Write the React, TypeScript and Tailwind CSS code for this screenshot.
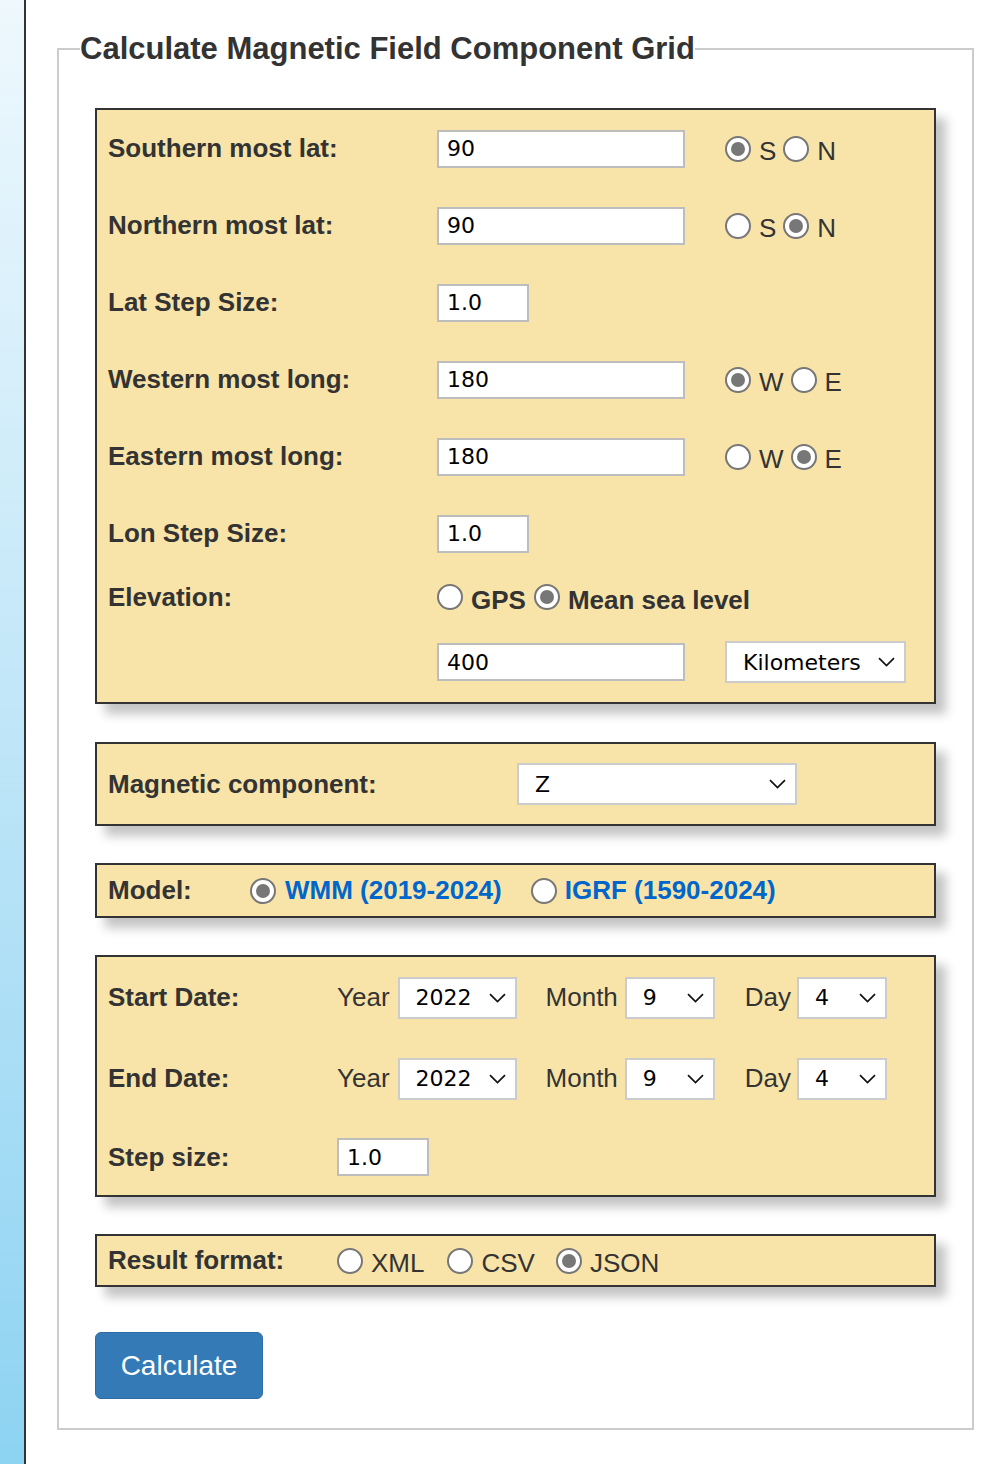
const inputFont = "font-['DejaVu_Sans',Verdana,sans-serif]";

function Radio({ checked }: { checked?: boolean }) {
  return (
    <span className="inline-flex h-[26px] w-[26px] shrink-0 items-center justify-center rounded-full border-2 border-[#777] bg-white">
      {checked && <span className="h-[14px] w-[14px] rounded-full bg-[#777]" />}
    </span>
  );
}

function Chevron() {
  return (
    <svg width="17" height="10" viewBox="0 0 17 10" fill="none" stroke="#111" strokeWidth="1.7">
      <path d="M1 1.2l7.5 7.3L16 1.2" />
    </svg>
  );
}

function Select({ value, className }: { value: string; className: string }) {
  return (
    <div
      className={`flex h-[42px] shrink-0 items-center justify-between border-2 border-[#ccc] bg-white pl-[16px] pr-[9px] text-[22px] text-black ${inputFont} ${className}`}
    >
      <span>{value}</span>
      <Chevron />
    </div>
  );
}

function TextBox({ value, className }: { value: string; className: string }) {
  return (
    <input
      readOnly
      value={value}
      className={`h-[38px] shrink-0 border-2 border-[#bdbdbd] bg-white px-[8px] text-[22px] text-black outline-none ${inputFont} ${className}`}
    />
  );
}

function Choice({
  checked,
  label,
  bold,
  className = "",
}: {
  checked?: boolean;
  label: string;
  bold?: boolean;
  className?: string;
}) {
  return (
    <span className={`flex shrink-0 items-center ${className}`}>
      <Radio checked={checked} />
      <span className={`ml-[8px] mt-[6px] text-[26px] ${bold ? "font-bold" : ""}`}>{label}</span>
    </span>
  );
}

const Panel = ({ children, className = "" }: { children: React.ReactNode; className?: string }) => (
  <div className={`border-2 border-[#333] bg-[#f8e4a8] pl-[11px] shadow-[10px_10px_10px_#c4c4c4] ${className}`}>{children}</div>
);

const Label = ({ children, className }: { children: React.ReactNode; className: string }) => (
  <span className={`shrink-0 text-[26px] font-bold ${className}`}>{children}</span>
);

export default function App() {
  const coordRows = [
    { label: "Southern most lat:", value: "90", opts: ["S", "N"], pick: 0 },
    { label: "Northern most lat:", value: "90", opts: ["S", "N"], pick: 1 },
    { label: "Lat Step Size:", value: "1.0", small: true },
    { label: "Western most long:", value: "180", opts: ["W", "E"], pick: 0 },
    { label: "Eastern most long:", value: "180", opts: ["W", "E"], pick: 1 },
    { label: "Lon Step Size:", value: "1.0", small: true },
  ];

  return (
    <div className="flex min-h-screen font-['Liberation_Sans',Arial,sans-serif] text-[#333]">
      <div className="w-[26px] shrink-0 border-r-2 border-[#333] bg-linear-to-b from-[#eef8fd] to-[#8dd3f2]" />
      <div className="flex-1 bg-white pl-[31px] pr-[28px] pt-[33px]">
        <fieldset className="border-2 border-[#ccc] px-[36px] pb-[29px] pt-[43px]">
          <legend className="-ml-[15px] text-[31px] font-bold leading-[32px]">
            Calculate Magnetic Field Component Grid
          </legend>

          <Panel>
            {coordRows.map((r) => (
              <div key={r.label} className="flex h-[77px] items-center">
                <Label className="w-[329px]">{r.label}</Label>
                <TextBox value={r.value} className={r.small ? "w-[92px]" : "w-[248px]"} />
                {r.opts && (
                  <div className="ml-[40px] flex items-center">
                    <Choice checked={r.pick === 0} label={r.opts[0]} />
                    <Choice checked={r.pick === 1} label={r.opts[1]} className="ml-[7px]" />
                  </div>
                )}
              </div>
            ))}
            <div className="flex h-[50px] items-center">
              <Label className="w-[329px]">Elevation:</Label>
              <Choice bold label="GPS" />
              <Choice bold checked label="Mean sea level" className="ml-[8px]" />
            </div>
            <div className="flex h-[80px] items-center">
              <span className="w-[329px] shrink-0" />
              <TextBox value="400" className="w-[248px]" />
              <Select value="Kilometers" className="ml-[40px] w-[181px]" />
            </div>
          </Panel>

          <Panel className="mt-[38px]">
            <div className="flex h-[80px] items-center">
              <Label className="w-[409px]">Magnetic component:</Label>
              <Select value="Z" className="w-[280px]" />
            </div>
          </Panel>

          <Panel className="mt-[37px]">
            <div className="flex h-[51px] items-center">
              <Label className="w-[142px]">Model:</Label>
              <span className="flex items-center">
                <Radio checked />
                <span className="ml-[9px] text-[26px] font-bold text-[#0066cc]">WMM (2019-2024)</span>
              </span>
              <span className="ml-[29px] flex items-center">
                <Radio />
                <span className="ml-[8px] text-[26px] font-bold text-[#0066cc]">IGRF (1590-2024)</span>
              </span>
            </div>
          </Panel>

          <Panel className="mt-[37px]">
            {["Start Date:", "End Date:"].map((d) => (
              <div key={d} className="flex h-[81px] items-center text-[26px]">
                <Label className="w-[229px]">{d}</Label>
                <span>Year</span>
                <Select value="2022" className="ml-[8px] w-[119px]" />
                <span className="ml-[29px]">Month</span>
                <Select value="9" className="ml-[7px] w-[90px]" />
                <span className="ml-[30px]">Day</span>
                <Select value="4" className="ml-[6px] w-[90px]" />
              </div>
            ))}
            <div className="flex h-[76px] items-center">
              <Label className="w-[229px]">Step size:</Label>
              <TextBox value="1.0" className="w-[92px]" />
            </div>
          </Panel>

          <Panel className="mt-[37px]">
            <div className="flex h-[49px] items-center">
              <Label className="w-[229px]">Result format:</Label>
              <Choice label="XML" />
              <Choice label="CSV" className="ml-[23px]" />
              <Choice checked label="JSON" className="ml-[21px]" />
            </div>
          </Panel>

          <button className="mt-[45px] h-[67px] w-[168px] rounded-[6px] border border-[#2e6da4] bg-[#337ab7] text-[28px] text-white">
            Calculate
          </button>
        </fieldset>
      </div>
    </div>
  );
}
